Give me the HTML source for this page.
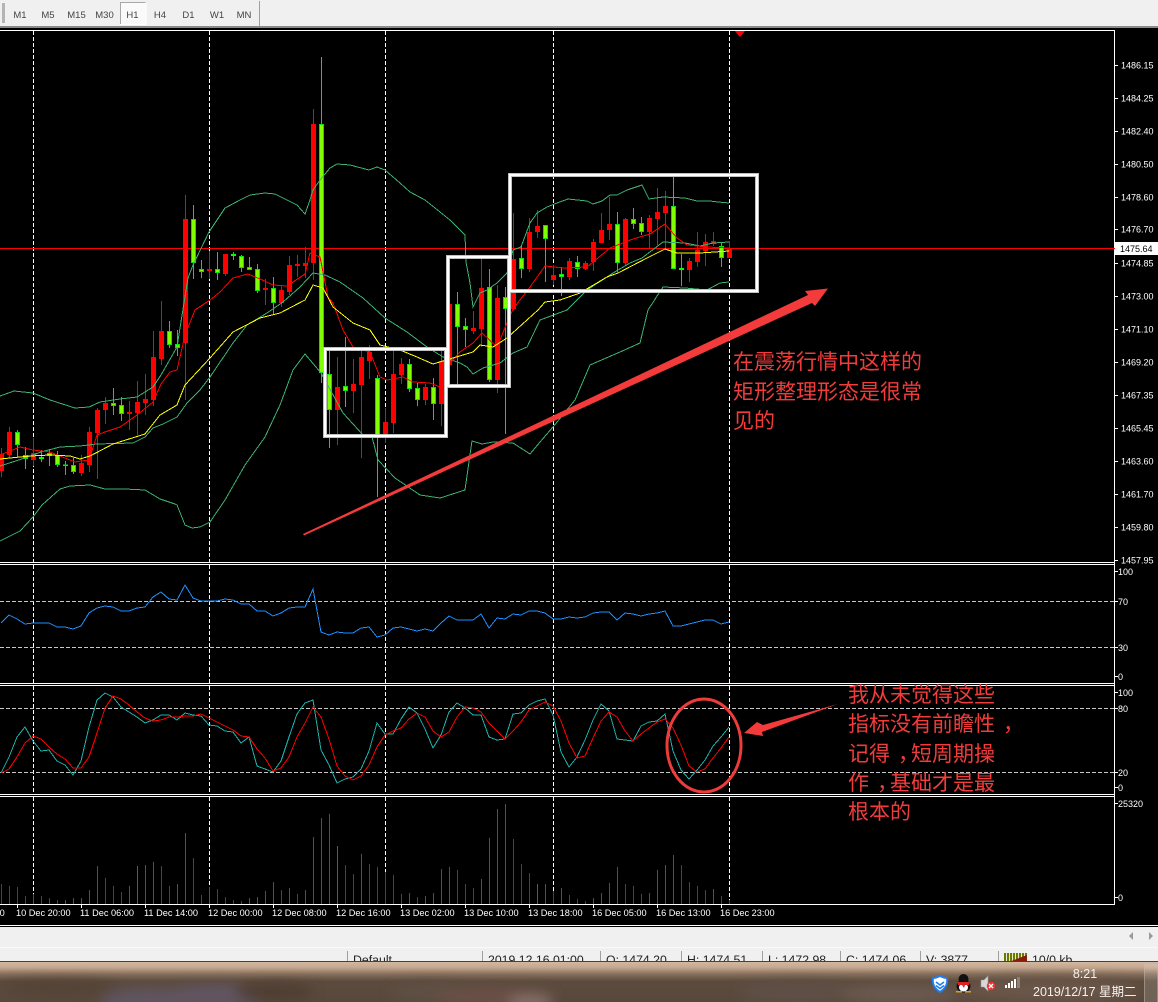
<!DOCTYPE html>
<html><head><meta charset="utf-8"><title>Chart</title>
<style>
html,body{margin:0;padding:0;background:#000;width:1158px;height:1002px;overflow:hidden}
svg{display:block}
text{font-family:"Liberation Sans","Noto Sans CJK SC",sans-serif}
</style></head><body>
<svg xmlns="http://www.w3.org/2000/svg" width="1158" height="1002" viewBox="0 0 1158 1002">
<defs>
<filter id="b" x="-20%" y="-50%" width="140%" height="200%"><feGaussianBlur stdDeviation="6"/></filter>
<linearGradient id="tb" x1="0" y1="0" x2="0" y2="1"><stop offset="0" stop-color="#d4b8a0"/><stop offset=".14" stop-color="#c4a68e"/><stop offset=".3" stop-color="#87705c"/><stop offset=".48" stop-color="#5c4b3d"/><stop offset="1" stop-color="#58483c"/></linearGradient>
<clipPath id="st"><rect x="0" y="948" width="1158" height="14"/></clipPath>
<clipPath id="tc"><rect x="0" y="962" width="1158" height="40"/></clipPath>
</defs>
<rect width="1158" height="1002" fill="#000"/>

<!-- toolbar -->
<rect width="1158" height="26" fill="#f0f0f0"/>
<rect y="26" width="1158" height="2" fill="#8a8a8a"/>
<rect x="2" y="3" width="3" height="20" fill="#b4b4b4"/>
<rect x="120" y="2" width="26" height="23" fill="#fafafa" stroke="none"/>
<path d="M120.500 24V2.500H145.500" fill="none" stroke="#a8a8a8"/>
<path d="M121 24.500H146V3" fill="none" stroke="#fff"/>
<rect x="259" y="1" width="1" height="25" fill="#a0a0a0"/>
<g font-size="9.500" fill="#444" text-anchor="middle">
<text x="20" y="18">M1</text><text x="48" y="18">M5</text><text x="76.500" y="18">M15</text><text x="104.500" y="18">M30</text><text x="132.500" y="18">H1</text><text x="160" y="18">H4</text><text x="188.500" y="18">D1</text><text x="217" y="18">W1</text><text x="244" y="18">MN</text>
</g>

<!-- frames -->
<path d="M0 30.500H1114.500V905M0 562.500H1114M0 564.500H1114M0 683.500H1114M0 685.500H1114M0 794.500H1114M0 796.500H1114M0 904.500H1114" fill="none" stroke="#fff" stroke-width="1" shape-rendering="crispEdges"/>

<!-- grid -->
<g stroke="#fff" stroke-dasharray="4 2" shape-rendering="crispEdges" fill="none">
<path d="M33.500 31V562M209.500 31V562M385.500 31V562M553.500 31V562M729.500 31V562M33.500 565V683M209.500 565V683M385.500 565V683M553.500 565V683M729.500 565V683M33.500 686V794M209.500 686V794M385.500 686V794M553.500 686V794M729.500 686V794M33.500 797V904M209.500 797V904M385.500 797V904M553.500 797V904M729.500 797V904"/>
</g>
<g stroke="#c8c8c8" stroke-dasharray="4 2" shape-rendering="crispEdges" fill="none">
<path d="M0 601.500H1114M0 647.500H1114M0 708.500H1114M0 772.500H1114"/>
</g>
<rect x="0" y="248" width="1115" height="1" fill="#f00"/>
<path d="M735 31h10l-5 6z" fill="#f00"/>

<!-- candle wicks -->
<path shape-rendering="crispEdges" fill="none" stroke="#f00" d="M1.500 448V477M9.500 427V458M33.500 438V466M81.500 455V476M89.500 427V472M97.500 408V479M105.500 397V424M129.500 401V430M137.500 381V435M145.500 374V415M153.500 331V406M161.500 301V365M185.500 195V400M209.500 251V279M225.500 254V276M265.500 279V305M281.500 286V307M289.500 256V295M297.500 255V277M305.500 247V278M313.500 109V280M337.500 357V445M353.500 359V413M361.500 349V458M369.500 345V379M385.500 408V443M393.500 351V433M401.500 358V384M425.500 384V405M441.500 347V426M449.500 300V367M473.500 311V334M481.500 257V347M497.500 285V393M513.500 213V310M529.500 218V272M537.500 210V238M553.500 265V285M569.500 258V280M585.500 261V270M593.500 239V271M601.500 213V243M609.500 197V240M625.500 218V266M649.500 215V248M657.500 188V245M665.500 191V250M689.500 258V282M697.500 232V267M705.500 234V266M713.500 232V246M729.500 241V258"/>
<path shape-rendering="crispEdges" fill="none" stroke="#00e800" d="M17.500 430V457M25.500 447V469M41.500 450V462M49.500 449V466M57.500 451V467M65.500 461V475M73.500 458V474M113.500 388V415M121.500 397V421M169.500 321V348M177.500 330V356M193.500 205V279M201.500 260V278M217.500 252V280M233.500 252V260M241.500 255V272M249.500 257V270M257.500 264V293M273.500 277V315M321.500 57V383M329.500 349V448M345.500 337V407M377.500 375V497M409.500 359V392M417.500 383V406M433.500 378V420M457.500 292V385M465.500 318V347M489.500 269V382M505.500 287V434M521.500 246V278M545.500 225V282M561.500 267V296M577.500 256V277M617.500 212V272M633.500 208V229M641.500 217V235M673.500 177V269M681.500 254V286M721.500 242V267"/>
<!-- red bodies -->
<path shape-rendering="crispEdges" fill="none" stroke="#f00" stroke-width="5" d="M1.500 454V471M9.500 432V455M33.500 453V460M81.500 463V473M89.500 432V465M97.500 410V433M105.500 403V410M129.500 412V414M137.500 402V413M145.500 399V403M153.500 357V400M161.500 331V359M185.500 219V343M209.500 269V271M225.500 254V274M265.500 288V290M281.500 290V303M289.500 265V292M297.500 264V266M305.500 263V266M313.500 124V263M337.500 387V410M353.500 384V391M361.500 357V385M369.500 352V361M385.500 422V436M393.500 374V423M401.500 364V375M425.500 387V400M441.500 361V404M449.500 304V365M473.500 328V331M481.500 288V329M497.500 298V380M513.500 259V309M529.500 232V269M537.500 226V232M553.500 275V280M569.500 261V277M585.500 263V269M593.500 242V262M601.500 230V243M609.500 224V230M625.500 219V263M649.500 218V232M657.500 212V219M665.500 206V213M689.500 261V270M697.500 250V262M705.500 242V251M713.500 241V244M729.500 248V258"/>
<!-- green bodies -->
<path shape-rendering="crispEdges" fill="#7fff00" stroke="#00e800" d="M15.500 432.500h4V444.500h-4zM23.500 455.500h4V458.500h-4zM47.500 453.500h4V455.500h-4zM55.500 455.500h4V464.500h-4zM63.500 465h4V465.500h-4zM71.500 465.500h4V471.500h-4zM111.500 403.500h4V405.500h-4zM119.500 405.500h4V413.500h-4zM167.500 331.500h4V344.500h-4zM175.500 344.500h4V347.500h-4zM191.500 219.500h4V262.500h-4zM199.500 269.500h4V271.500h-4zM215.500 269.500h4V272.500h-4zM239.500 256.500h4V267.500h-4zM247.500 267.500h4V269.500h-4zM255.500 269.500h4V290.500h-4zM271.500 288.500h4V302.500h-4zM319.500 124.500h4V372.500h-4zM327.500 374.500h4V409.500h-4zM343.500 386.500h4V390.500h-4zM375.500 378.500h4V435.500h-4zM407.500 364.500h4V388.500h-4zM415.500 388.500h4V399.500h-4zM431.500 387.500h4V403.500h-4zM455.500 304.500h4V326.500h-4zM463.500 326.500h4V329.500h-4zM487.500 287.500h4V379.500h-4zM503.500 297.500h4V308.500h-4zM519.500 258.500h4V268.500h-4zM543.500 225.500h4V238.500h-4zM559.500 274.500h4V276.500h-4zM575.500 262.500h4V268.500h-4zM615.500 224.500h4V262.500h-4zM631.500 219.500h4V223.500h-4zM639.500 223.500h4V231.500h-4zM671.500 206.500h4V268.500h-4zM719.500 246.500h4V257.500h-4z"/>
<path shape-rendering="crispEdges" fill="none" stroke="#00ff00" d="M39 458.500h5M231 255.500h5M679 268.500h5M679 269.500h5M39 457.500h5M231 254.500h5"/>

<!-- bollinger -->
<g fill="none" stroke="#3cb371" shape-rendering="crispEdges">
<polyline points="0,396 14,391 33,393 50,400 75,408 89,407 100,402 120,399 137,397 153,387 161,375 177,347 188,278 193,265 209,232 225,208 240,200 250,195 265,193 275,194 297,205 305,214 310,200 313,190 320,180 330,168 337,164 350,165 369,170 377,167 385,170 400,183 410,192 425,200 440,212 450,220 465,235 466,262 470,283 473,307 480,293 487,290 497,283 507,273 513,250 521,247 530,223 537,213 547,207 557,203 568,199 587,201 593,204 602,201 610,195 617,195 627,190 642,185 649,199 663,197 685,198 697,201 710,201 718,202 729,203"/>
<polyline points="0,466 25,458 41,452 60,447 80,446 97,444 133,443 145,437 153,428 163,424 177,417 187,403 200,390 210,377 233,343 247,325 267,313 283,302 300,287 313,273 325,275 340,282 363,298 385,318 407,332 427,347 443,357 460,363 467,367 473,374 483,368 500,363 513,353 527,347 540,320 567,310 587,290 613,273 630,263 642,258 663,242 685,243 700,246 713,243 729,242"/>
<polyline points="0,541 20,531 33,517 42,505 60,489 70,486 90,485 105,489 125,489 145,490 160,499 175,504 177,505 185,525 192,528 200,527 210,522 225,500 245,465 265,437 280,405 293,370 305,354 321,373 343,413 363,435 372,437 378,460 395,478 420,495 440,498 465,490 472,441 482,444 493,442 513,443 530,454 540,442 553,427 575,400 590,365 620,352 640,343 648,310 663,287 685,288 707,290 720,283 729,282"/>
</g>
<!-- red MA -->
<polyline fill="none" stroke="#f00" shape-rendering="crispEdges" points="0,455 20,447 33,450 50,452 65,458 75,462 89,460 97,435 105,432 120,427 137,415 153,402 161,384 170,372 177,370 185,335 195,310 210,300 220,292 233,278 248,274 260,279 273,285 287,286 305,274 310,253 320,257 328,297 333,303 343,330 353,347 370,352 380,377 387,380 403,377 413,382 430,383 440,387 450,363 460,352 473,343 482,333 497,347 507,323 513,309 530,287 545,266 563,268 587,267 610,248 633,239 650,234 665,224 677,238 687,245 707,247 729,248"/>
<!-- yellow MA -->
<polyline fill="none" stroke="#ff0" shape-rendering="crispEdges" points="0,459 30,456 50,455 70,456 80,459 90,456 113,444 145,434 160,415 177,405 185,385 210,358 233,332 260,318 280,313 305,300 313,285 323,288 333,307 353,323 370,330 380,345 400,350 417,357 433,364 453,358 473,352 480,345 493,347 507,338 527,320 538,310 545,302 560,300 580,293 607,277 618,273 647,258 665,249 677,253 700,253 729,251"/>

<!-- RSI -->
<polyline fill="none" stroke="#1e90ff" shape-rendering="crispEdges" points="1,623 9,615 17,619 25,624 33,623 41,623 49,623 57,627 65,627 73,629 81,626 89,613 97,608 105,606 113,607 121,611 129,611 137,608 145,607 153,597 161,592 169,599 177,600 185,585 193,598 201,601 209,601 217,601 225,599 233,600 241,604 249,604 257,611 265,611 273,616 281,613 289,608 297,607 305,607 313,589 321,632 329,635 337,632 345,633 353,633 361,628 369,627 377,637 385,635 393,628 401,627 409,629 417,631 425,629 433,631 441,623 449,616 457,620 473,620 481,614 489,628 497,618 505,619 513,614 521,615 529,611 537,611 545,613 553,619 561,619 569,617 577,618 585,617 593,613 601,612 609,612 617,620 625,613 633,614 641,616 649,614 657,613 665,611 673,626 681,626 689,624 697,622 705,620 713,620 721,624 729,622"/>

<!-- stochastic -->
<polyline fill="none" stroke="#20b2aa" shape-rendering="crispEdges" points="1,773 9,757 17,737 25,727 33,741 41,751 49,750 57,761 65,765 73,775 81,761 89,727 97,700 105,693 113,697 121,707 129,712 137,717 145,723 153,720 161,715 169,715 177,720 185,713 193,715 201,716 209,725 217,726 225,731 233,732 241,743 249,737 257,766 265,769 273,772 281,761 289,737 297,714 305,703 313,700 321,750 329,765 337,783 345,779 353,777 361,769 369,751 377,723 385,734 393,734 401,719 409,707 417,713 425,729 433,748 441,735 449,712 457,703 465,708 473,715 481,715 489,737 497,740 505,739 513,714 521,713 529,705 537,701 545,699 553,715 561,752 569,767 577,757 585,740 593,720 601,704 609,711 617,739 625,740 633,741 641,726 649,722 657,721 665,714 673,751 681,770 689,779 697,770 705,760 713,746 721,737 729,727"/>
<polyline fill="none" stroke="#f00" shape-rendering="crispEdges" points="1,773 9,769 17,757 25,743 33,736 41,739 49,747 57,754 65,759 73,768 81,768 89,757 97,733 105,708 113,696 121,699 129,705 137,712 145,718 153,721 161,720 169,717 177,717 185,716 193,716 201,714 209,718 217,722 225,726 233,730 241,736 249,737 257,749 265,758 273,771 281,768 289,757 297,737 305,723 313,707 321,717 329,739 337,766 345,776 353,780 361,776 369,765 377,747 385,735 393,731 401,728 409,719 417,713 425,717 433,731 441,737 449,732 457,717 465,707 473,708 481,712 489,723 497,731 505,739 513,731 521,722 529,710 537,706 545,702 553,706 561,721 569,743 577,758 585,756 593,738 601,721 609,712 617,717 625,731 633,741 641,734 649,728 657,722 665,719 673,728 681,745 689,766 697,772 705,769 713,758 721,748 729,737"/>

<!-- volume -->
<path shape-rendering="crispEdges" fill="none" stroke="#e60000" d="M1.500 904V884M9.500 904V886M17.500 904V887M25.500 904V896M41.500 904V896M49.500 904V898M57.500 904V900M105.500 904V878M113.500 904V886M121.500 904V892M161.500 904V866M169.500 904V886M193.500 904V858M201.500 904V895M217.500 904V889M225.500 904V897M233.500 904V900M241.500 904V901M281.500 904V890M297.500 904V894M345.500 904V865M353.500 904V874M369.500 904V864M377.500 904V867M385.500 904V872M393.500 904V875M401.500 904V894M417.500 904V897M457.500 904V870M465.500 904V884M473.500 904V888M513.500 904V839M521.500 904V864M529.500 904V873M553.500 904V891M569.500 904V895M577.500 904V899M585.500 904V901M625.500 904V884M633.500 904V886M641.500 904V894M681.500 904V865M689.500 904V882M697.500 904V886M705.500 904V890M721.500 904V896M729.500 904V900"/>
<path shape-rendering="crispEdges" fill="none" stroke="#008a00" d="M33.500 904V894M65.500 904V900M73.500 904V898M81.500 904V898M89.500 904V890M97.500 904V866M129.500 904V886M145.500 904V865M153.500 904V862M177.500 904V884M185.500 904V833M209.500 904V887M249.500 904V898M257.500 904V897M265.500 904V891M273.500 904V882M289.500 904V888M305.500 904V890M313.500 904V837M321.500 904V818M329.500 904V814M361.500 904V854M409.500 904V893M425.500 904V896M433.500 904V893M441.500 904V869M449.500 904V867M481.500 904V879M489.500 904V838M497.500 904V809M505.500 904V804M545.500 904V884M561.500 904V888M593.500 904V898M601.500 904V893M609.500 904V883M617.500 904V867M649.500 904V893M657.500 904V870M665.500 904V865M673.500 904V855M713.500 904V889"/>
<path shape-rendering="crispEdges" fill="none" stroke="#5a5a5a" d="M137.500 904V866M337.500 904V846M537.500 904V884"/>

<!-- annotations -->
<g fill="none" stroke="#c0c0c0" stroke-width="4" shape-rendering="crispEdges"><rect x="325" y="349" width="121" height="87"/><rect x="448" y="257" width="61" height="129"/><rect x="510" y="175" width="247" height="116"/></g>
<g fill="none" stroke="#fff" stroke-width="2" shape-rendering="crispEdges"><rect x="325" y="349" width="121" height="87"/><rect x="448" y="257" width="61" height="129"/><rect x="510" y="175" width="247" height="116"/></g>
<polygon points="303,534 304,535.500 812,303 815,306 828,288.500 805,291 808,295" fill="#f33b3b"/>
<polygon points="838,704 763,725 757,722 744,733 763,736 762,732" fill="#f33b3b"/>
<ellipse cx="704" cy="745.500" rx="37" ry="46.500" fill="none" stroke="#ee3b3b" stroke-width="3"/>
<g font-size="21" fill="#f23c3c">
<text x="733" y="369">在震荡行情中这样的</text>
<text x="733" y="399">矩形整理形态是很常</text>
<text x="733" y="428">见的</text>
<text x="848" y="702">我从未觉得这些</text>
<text x="848" y="731">指标没有前瞻性<tspan dx="8">，</tspan></text>
<text x="848" y="761">记得<tspan dx="8">，</tspan><tspan dx="-8">短周期操</tspan></text>
<text x="848" y="790">作<tspan dx="8">，</tspan><tspan dx="-8">基础才是最</tspan></text>
<text x="848" y="819">根本的</text>
</g>

<!-- right axis -->
<path stroke="#fff" shape-rendering="crispEdges" d="M1115 65.500h3M1115 98.500h3M1115 131.500h3M1115 164.500h3M1115 197.500h3M1115 229.500h3M1115 263.500h3M1115 296.500h3M1115 329.500h3M1115 362.500h3M1115 395.500h3M1115 428.500h3M1115 461.500h3M1115 494.500h3M1115 527.500h3M1115 560.500h3M1115 571.500h3M1115 601.500h3M1115 647.500h3M1115 676.500h3M1115 692.500h3M1115 708.500h3M1115 772.500h3M1115 787.500h3M1115 803.500h3M1115 897.500h3"/>
<g font-size="9" fill="#fff">
<text x="1121" y="68.500">1486.15</text><text x="1121" y="101.500">1484.25</text><text x="1121" y="134.500">1482.40</text><text x="1121" y="167.500">1480.50</text><text x="1121" y="200.500">1478.60</text><text x="1121" y="232.500">1476.70</text><text x="1121" y="266.500">1474.85</text><text x="1121" y="299.500">1473.00</text><text x="1121" y="332.500">1471.10</text><text x="1121" y="365.500">1469.20</text><text x="1121" y="398.500">1467.35</text><text x="1121" y="431.500">1465.45</text><text x="1121" y="464.500">1463.60</text><text x="1121" y="497.500">1461.70</text><text x="1121" y="530.500">1459.80</text><text x="1121" y="563.500">1457.95</text>
<text x="1118" y="575">100</text><text x="1118" y="605">70</text><text x="1118" y="651">30</text><text x="1118" y="680">0</text>
<text x="1118" y="696">100</text><text x="1118" y="712">80</text><text x="1118" y="776">20</text><text x="1118" y="791">0</text>
<text x="1118" y="807">25320</text><text x="1118" y="901">0</text>
</g>
<rect x="1115" y="242" width="43" height="13" fill="#fff"/>
<text x="1120" y="252" font-size="9" fill="#000">1475.64</text>

<!-- time axis -->
<path stroke="#fff" shape-rendering="crispEdges" d="M17.500 904v4M81.500 904v4M145.500 904v4M209.500 904v4M273.500 904v4M337.500 904v4M401.500 904v4M465.500 904v4M529.500 904v4M593.500 904v4M657.500 904v4M721.500 904v4"/>
<g font-size="9.200" fill="#fff">
<text x="-8" y="916">:00</text><text x="16" y="916">10 Dec 20:00</text><text x="80" y="916">11 Dec 06:00</text><text x="144" y="916">11 Dec 14:00</text><text x="208" y="916">12 Dec 00:00</text><text x="272" y="916">12 Dec 08:00</text><text x="336" y="916">12 Dec 16:00</text><text x="400" y="916">13 Dec 02:00</text><text x="464" y="916">13 Dec 10:00</text><text x="528" y="916">13 Dec 18:00</text><text x="592" y="916">16 Dec 05:00</text><text x="656" y="916">16 Dec 13:00</text><text x="720" y="916">16 Dec 23:00</text>
</g>

<!-- scroll + status -->
<rect y="925" width="1158" height="1" fill="#fff"/>
<rect y="927" width="1158" height="35" fill="#f0f0f0"/>
<rect y="947" width="1158" height="1" fill="#fafafa"/>
<path d="M1133 932v8l-4-4zM1149 932v8l4-4z" fill="#999"/>
<g clip-path="url(#st)">
<path stroke="#a0a0a0" shape-rendering="crispEdges" d="M347.500 951V962M482.500 951V962M600.500 951V962M681.500 951V962M762.500 951V962M840.500 951V962M920.500 951V962M998.500 951V962"/>
<g font-size="12.300" fill="#222">
<text x="353" y="964">Default</text><text x="488" y="964">2019.12.16 01:00</text><text x="606" y="964">O: 1474.20</text><text x="687" y="964">H: 1474.51</text><text x="768" y="964">L: 1472.98</text><text x="846" y="964">C: 1474.06</text><text x="926" y="964">V: 3877</text><text x="1032" y="964">10/0 kb</text>
</g>
<path d="M1004 953h23v9h-23z" fill="#e8e8d0"/>
<path stroke="#6a7a00" stroke-width="2" d="M1005 953v9M1008 953v9M1011 953v9M1014 953v9M1017 953v9M1020 953v9M1023 953v9M1026 953v9" shape-rendering="crispEdges"/>
<path d="M1009 962l18-7v7z" fill="#8b1a0a"/>
</g>

<!-- taskbar -->
<rect y="961" width="1158" height="1" fill="#4a4038"/>
<rect y="962" width="1158" height="40" fill="url(#tb)"/>
<g clip-path="url(#tc)">
<g filter="url(#b)">
<ellipse cx="150" cy="1000" rx="50" ry="12" fill="#5f5560"/>
<ellipse cx="215" cy="996" rx="50" ry="12" fill="#605562"/>
<ellipse cx="60" cy="988" rx="60" ry="7" fill="#524234"/>
<ellipse cx="275" cy="992" rx="40" ry="9" fill="#4f3e30"/>
<ellipse cx="430" cy="992" rx="40" ry="9" fill="#5f5044"/>
<ellipse cx="495" cy="997" rx="60" ry="10" fill="#6b5046"/>
<ellipse cx="530" cy="1002" rx="22" ry="7" fill="#85716a"/>
<ellipse cx="800" cy="992" rx="60" ry="10" fill="#5f5046"/>
<ellipse cx="900" cy="994" rx="60" ry="10" fill="#6a5a50"/>
<ellipse cx="1050" cy="990" rx="90" ry="12" fill="#6a564a"/>
</g>
</g>
<!-- tray -->
<path d="M933 978c3 0 5-1 7-2 2 1 4 2 7 2 1 6-2 11-7 14-5-3-8-8-7-14z" fill="#fff" stroke="#1e7ef0" stroke-width="2"/>
<path d="M936 982l4 3 4-3M936 985.500l4 3 4-3" fill="none" stroke="#1e7ef0" stroke-width="1.600"/>
<ellipse cx="963.500" cy="986" rx="7" ry="6.500" fill="#111"/>
<circle cx="963.500" cy="979" r="5" fill="#111"/>
<ellipse cx="963.500" cy="987.500" rx="4.500" ry="4" fill="#fff"/>
<path d="M957 982h13l-1 3h-4l-1 3-2-3h-4z" fill="#d22"/>
<path d="M956 991h6v1.500h-6zM965 991h6v1.500h-6z" fill="#e0a020"/>
<path d="M981 980h3l4-4v15l-4-4h-3z" fill="#d8d8d8" stroke="#999" stroke-width=".6"/>
<circle cx="991" cy="986" r="4.200" fill="#e33"/>
<path d="M989 984l4 4M993 984l-4 4" stroke="#fff" stroke-width="1.300"/>
<path d="M1005 985h2v3h-2zM1008 983h2v5h-2zM1011 981h2v7h-2zM1014 979h2v9h-2z" fill="#fff"/>
<path d="M1017 977h3v11h-3z" fill="#8a8178"/>
<text x="1085" y="978" font-size="12.500" fill="#f5f0ec" text-anchor="middle">8:21</text>
<text x="1033" y="996" font-size="12.500" fill="#f5f0ec">2019/12/17 星期二</text>
<rect x="1144.500" y="964.500" width="13" height="38" fill="#ffffff" fill-opacity=".14" stroke="#cdbfb4" stroke-opacity=".5"/>
</svg>
</body></html>
